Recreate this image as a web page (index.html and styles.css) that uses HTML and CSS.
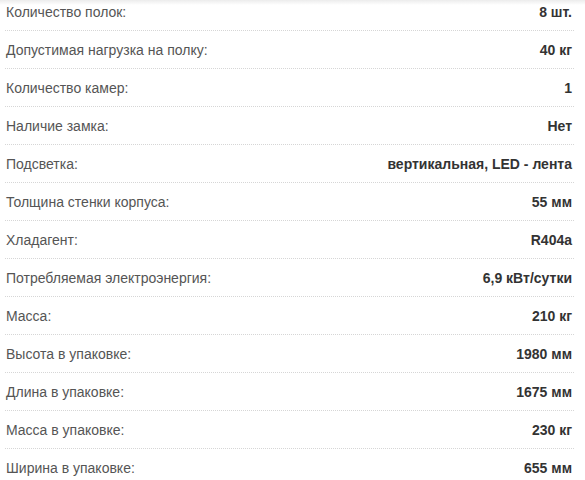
FILE: index.html
```html
<!DOCTYPE html>
<html lang="ru">
<head>
<meta charset="utf-8">
<link rel="stylesheet" href="styles.css">
</head>
<body>
<div class="shade"></div>
<div class="specs">
  <div class="row"><span class="label">Количество полок:</span><span class="value">8 шт.</span></div>
  <div class="row"><span class="label">Допустимая нагрузка на полку:</span><span class="value">40 кг</span></div>
  <div class="row"><span class="label">Количество камер:</span><span class="value">1</span></div>
  <div class="row"><span class="label">Наличие замка:</span><span class="value">Нет</span></div>
  <div class="row"><span class="label">Подсветка:</span><span class="value">вертикальная, LED - лента</span></div>
  <div class="row"><span class="label">Толщина стенки корпуса:</span><span class="value">55 мм</span></div>
  <div class="row"><span class="label">Хладагент:</span><span class="value">R404a</span></div>
  <div class="row"><span class="label">Потребляемая электроэнергия:</span><span class="value">6,9 кВт/сутки</span></div>
  <div class="row"><span class="label">Масса:</span><span class="value">210 кг</span></div>
  <div class="row"><span class="label">Высота в упаковке:</span><span class="value">1980 мм</span></div>
  <div class="row"><span class="label">Длина в упаковке:</span><span class="value">1675 мм</span></div>
  <div class="row"><span class="label">Масса в упаковке:</span><span class="value">230 кг</span></div>
  <div class="row"><span class="label">Ширина в упаковке:</span><span class="value">655 мм</span></div>
</div>
</body>
</html>
```
FILE: styles.css
```css
html, body {
  margin: 0;
  padding: 0;
  background: #fff;
  overflow: hidden;
}
body {
  position: relative;
  font-family: "Liberation Sans", Arial, sans-serif;
  font-size: 14px;
}
.shade {
  position: absolute;
  top: 0;
  left: 0;
  right: 0;
  height: 5px;
  background: linear-gradient(#ececec, rgba(255,255,255,0));
}
.specs {
  margin: -7px 11px 0 5px;
}
.row {
  display: flex;
  justify-content: space-between;
  align-items: center;
  height: 37px;
  border-bottom: 1px dotted #d6d6d6;
  padding: 0 2px 0 1px;
}
.label {
  color: #555;
}
.value {
  color: #333;
  font-weight: bold;
}
```
